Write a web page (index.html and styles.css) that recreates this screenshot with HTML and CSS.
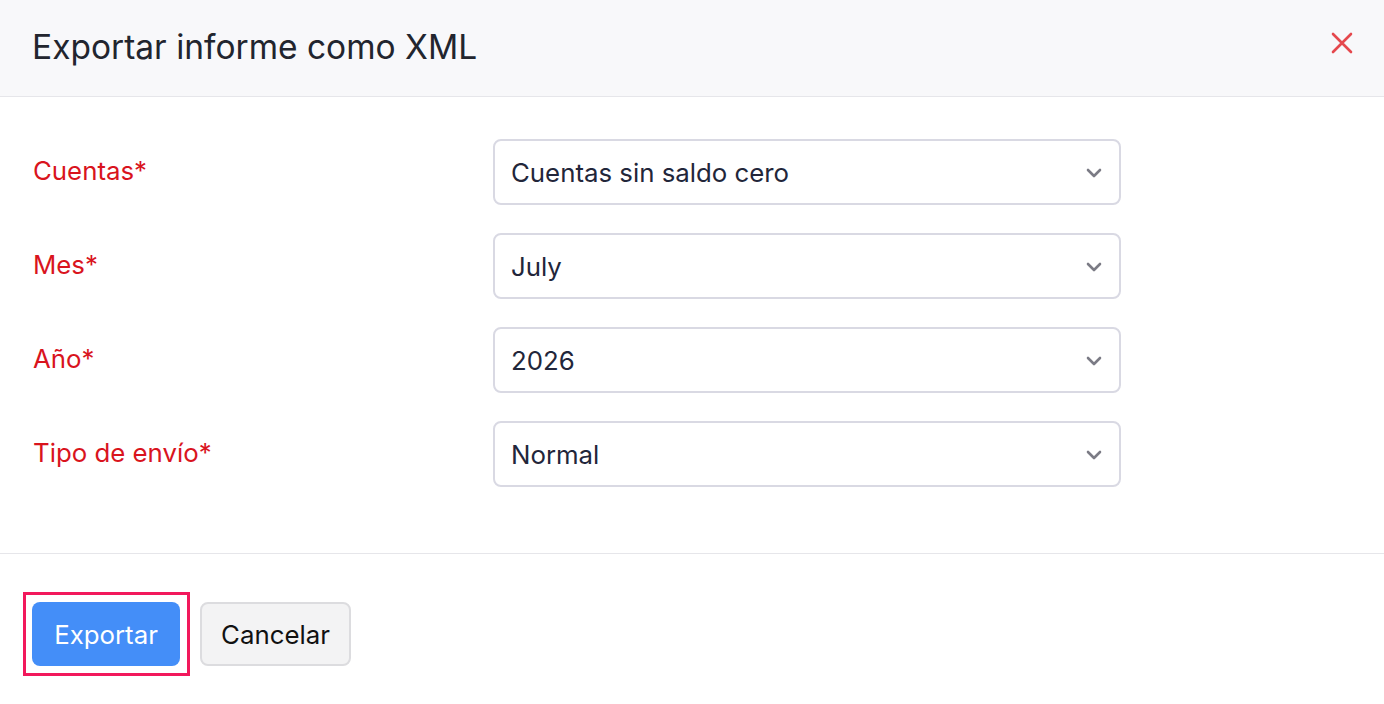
FILE: index.html
```html
<!DOCTYPE html>
<html lang="es">
<head>
<meta charset="utf-8">
<title>Exportar informe como XML</title>
<link rel="stylesheet" href="styles.css">
</head>
<body>
<div class="modal">
  <header class="modal-header">
    <h1 class="modal-title">Exportar informe como XML</h1>
    <button class="close-btn" aria-label="Cerrar">
      <svg width="22" height="22" viewBox="0 0 22 22"><path d="M2 2 L20 20 M20 2 L2 20" stroke="#e5484d" stroke-width="2.6" stroke-linecap="round"/></svg>
    </button>
  </header>
  <div class="modal-body">
    <div class="form-row">
      <label class="form-label">Cuentas*</label>
      <div class="select"><span>Cuentas sin saldo cero</span><svg class="chev" width="16" height="10" viewBox="0 0 16 10"><path d="M2 2 L8 8 L14 2" fill="none" stroke="#7b7b85" stroke-width="2.6" stroke-linecap="round" stroke-linejoin="round"/></svg></div>
    </div>
    <div class="form-row">
      <label class="form-label">Mes*</label>
      <div class="select"><span>July</span><svg class="chev" width="16" height="10" viewBox="0 0 16 10"><path d="M2 2 L8 8 L14 2" fill="none" stroke="#7b7b85" stroke-width="2.6" stroke-linecap="round" stroke-linejoin="round"/></svg></div>
    </div>
    <div class="form-row">
      <label class="form-label">Año*</label>
      <div class="select"><span>2026</span><svg class="chev" width="16" height="10" viewBox="0 0 16 10"><path d="M2 2 L8 8 L14 2" fill="none" stroke="#7b7b85" stroke-width="2.6" stroke-linecap="round" stroke-linejoin="round"/></svg></div>
    </div>
    <div class="form-row">
      <label class="form-label">Tipo de envío*</label>
      <div class="select"><span>Normal</span><svg class="chev" width="16" height="10" viewBox="0 0 16 10"><path d="M2 2 L8 8 L14 2" fill="none" stroke="#7b7b85" stroke-width="2.6" stroke-linecap="round" stroke-linejoin="round"/></svg></div>
    </div>
  </div>
  <footer class="modal-footer">
    <div class="highlight"><button class="btn btn-primary">Exportar</button></div>
    <button class="btn btn-secondary">Cancelar</button>
  </footer>
</div>
</body>
</html>
```

FILE: styles.css
```css
* { box-sizing: border-box; }
html, body { margin: 0; padding: 0; background: #fff; }
body { font-family: Inter, "Noto Sans", sans-serif; color: #21263a; }

.modal { width: 1384px; height: 704px; background: #fff; }

.modal-header {
  height: 97px;
  background: #f8f8fa;
  border-bottom: 1px solid #e6e6ea;
  display: flex;
  align-items: center;
  justify-content: space-between;
  padding: 0 30px 0 32px;
}
.modal-title {
  margin: 0;
  font-size: 33.5px;
  font-weight: 400;
  color: #22252e;
  padding-bottom: 2px;
}
.close-btn {
  border: 0; background: transparent; padding: 0;
  width: 22px; height: 22px; margin-right: 1px; margin-bottom: 10px;
  display: flex;
}

.modal-body {
  padding: 42px 33px 66px 33px;
  display: flex;
  flex-direction: column;
  gap: 28px;
  border-bottom: 1px solid #e6e6ea;
}
.form-row {
  display: grid;
  grid-template-columns: 460px 628px;
  align-items: center;
}
.form-label {
  font-size: 25.8px;
  color: #d9141d;
  padding-bottom: 4px;
}
.select {
  height: 66px;
  border: 2px solid #d9d9e3;
  border-radius: 8px;
  display: flex;
  align-items: center;
  justify-content: space-between;
  padding: 0 17px 0 16px;
  font-size: 25.8px;
  color: #22263a;
}
.chev { margin-top: 2px; }

.modal-footer {
  display: flex;
  align-items: center;
  gap: 10px;
  padding: 38px 0 0 23px;
}
.highlight {
  border: 3px solid #f2185c;
  padding: 7px 7px 7px 6px;
  display: flex;
}
.btn {
  font-family: Inter, "Noto Sans", sans-serif;
  font-size: 25.8px;
  border-radius: 8px;
  height: 64px;
  cursor: pointer;
  padding: 0;
}
.btn-primary {
  background: #448ef8;
  color: #fff;
  border: 0;
  width: 148px;
}
.btn-secondary {
  background: #f3f3f4;
  color: #111;
  border: 2px solid #dcdcdf;
  width: 151px;
  height: 64px;
}
```
